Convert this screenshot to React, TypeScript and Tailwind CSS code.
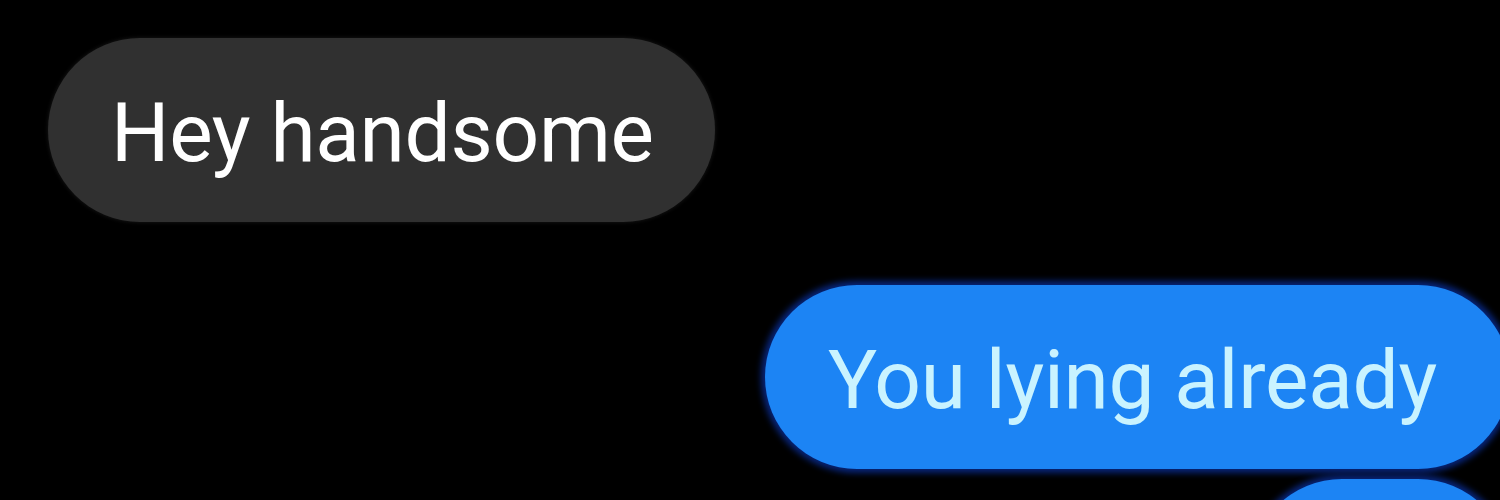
import React from 'react';

type Bubble = {
  text: string;
  mine: boolean;
};

const messages: Bubble[] = [
  { text: 'Hey handsome', mine: false },
  { text: 'You lying already', mine: true },
];

export default function App() {
  return (
    <div className="h-[500px] w-[1500px] overflow-hidden bg-black font-['Roboto','Noto_Sans',sans-serif]">
      <div className="flex flex-col pt-[38px]">
        {/* incoming */}
        <div className="ml-[48px] flex h-[184px] w-[667px] items-center rounded-full bg-[#303030] pl-[63px] pt-[6px] shadow-[0_0_4px_#1a1a1a]">
          <span className="text-[82px] leading-none tracking-[-0.3px] text-white">{messages[0].text}</span>
        </div>

        {/* outgoing */}
        <div className="mr-[-10px] mt-[63px] flex h-[184px] w-[745px] items-center self-end rounded-full bg-[#1c84f4] pl-[63px] pt-[6px] shadow-[0_0_6px_4px_#08257a]">
          <span className="text-[82px] leading-none tracking-[-0.3px] text-[#c9f3ff]">{messages[1].text}</span>
        </div>

        {/* next outgoing, cut off at the bottom */}
        <div className="mr-[-10px] mt-[10px] h-[184px] w-[260px] self-end rounded-full bg-[#1c84f4] shadow-[0_0_6px_4px_#08257a]" />
      </div>
    </div>
  );
}
